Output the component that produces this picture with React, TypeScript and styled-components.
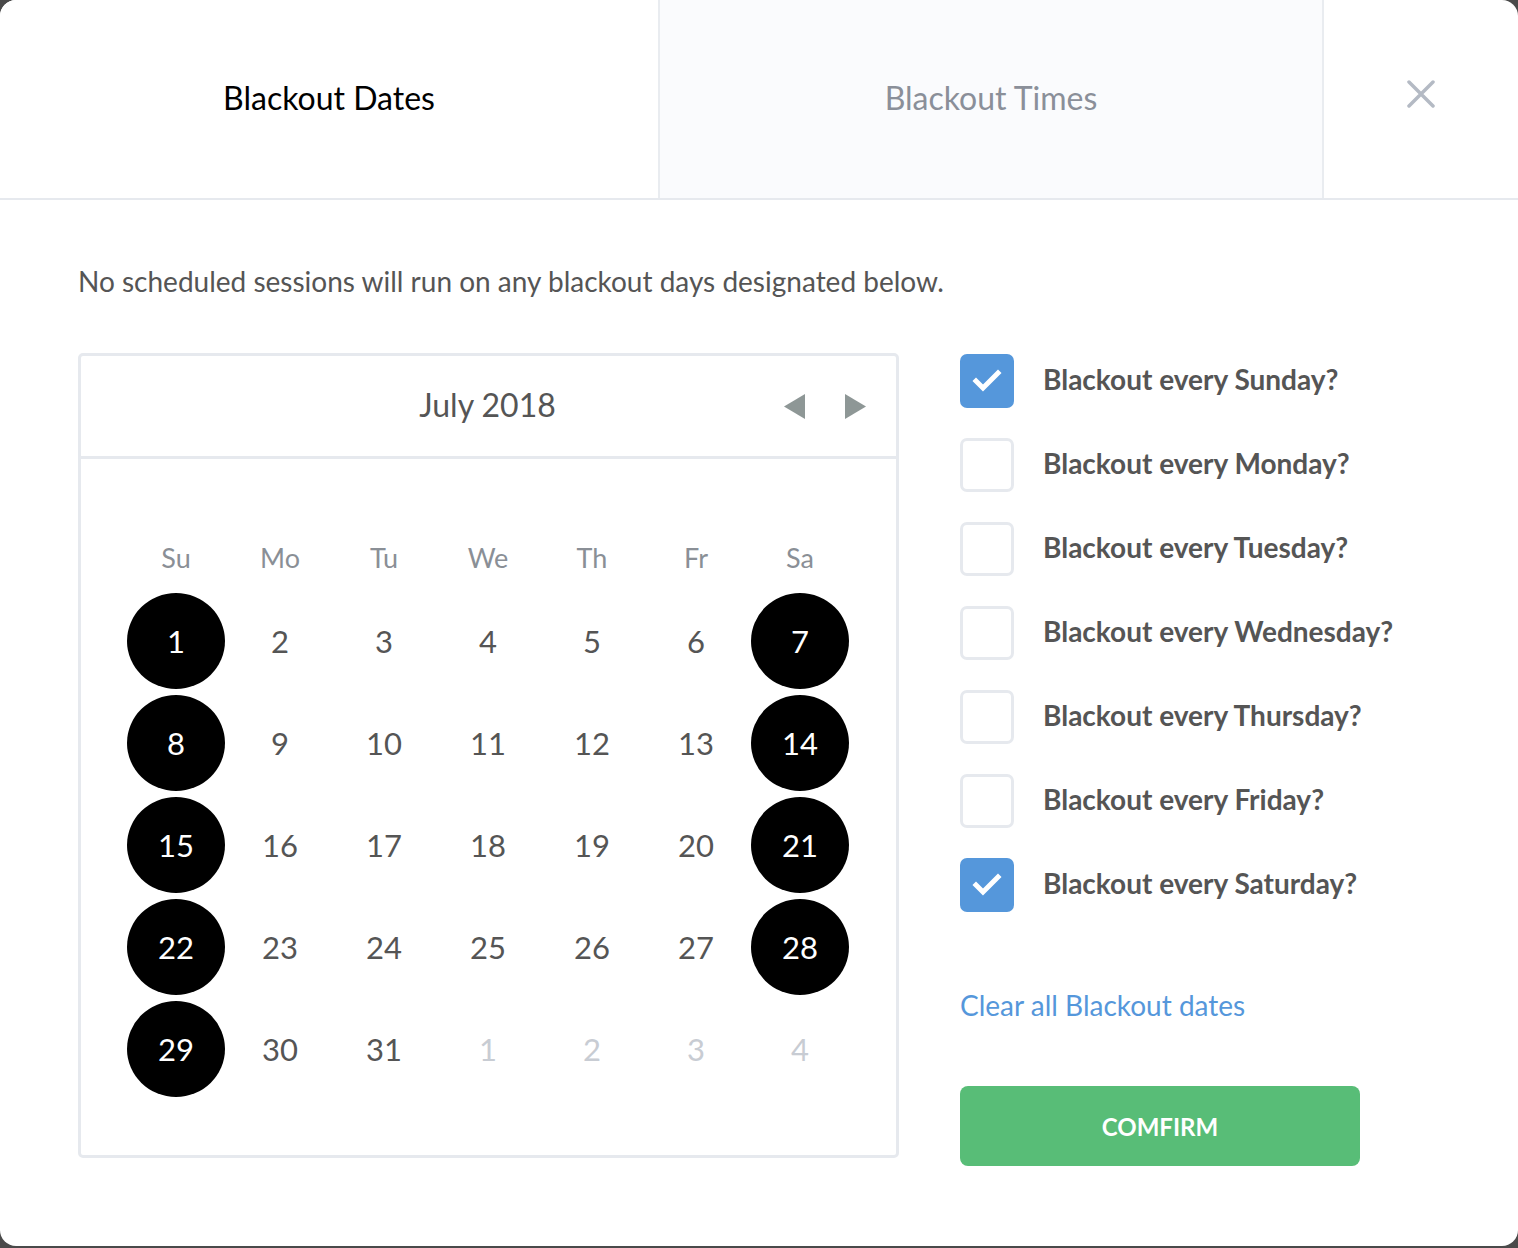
import React, { useState } from 'react'
import styled, { createGlobalStyle } from 'styled-components'

const GlobalStyle = createGlobalStyle`
  html, body {
    margin: 0;
    padding: 0;
    background: #4a4a4a;
  }
  * { box-sizing: border-box; }
  body {
    font-family: Lato, "Open Sans", sans-serif;
  }
`

const Modal = styled.div`
  width: 1518px;
  height: 1246px;
  background: #ffffff;
  border-radius: 16px;
  overflow: hidden;
  display: flex;
  flex-direction: column;
`

const Header = styled.div`
  display: flex;
  height: 200px;
  border-bottom: 2px solid #e6e9ee;
`

interface TabProps {
  active?: boolean
}
const Tab = styled.div<TabProps>`
  display: flex;
  align-items: center;
  justify-content: center;
  width: ${p => p.active ? '660px' : '664px'};
  background: ${p => p.active ? '#ffffff' : '#fafbfd'};
  border-right: 2px solid #e9ecf0;
  font-size: 32px;
  color: ${p => p.active ? '#000000' : '#8a8f99'};
  padding-bottom: 4px;
`

const Close = styled.div`
  flex: 1;
  display: flex;
  align-items: center;
  justify-content: center;
  padding-bottom: 10px;
`

const Body = styled.div`
  padding: 64px 0 0 78px;
`

const Intro = styled.p`
  margin: 0;
  font-size: 28px;
  line-height: 34px;
  color: #555555;
`

const Main = styled.div`
  display: flex;
  align-items: flex-start;
  margin-top: 55px;
`

const Calendar = styled.div`
  width: 821px;
  height: 805px;
  border: 3px solid #e6e9ee;
  border-radius: 5px;
`

const CalHeader = styled.div`
  position: relative;
  height: 103px;
  border-bottom: 3px solid #e6e9ee;
  display: flex;
  align-items: center;
  justify-content: center;
  font-size: 32px;
  color: #555555;
`

const Month = styled.span`
  margin-left: -2px;
  margin-top: -4px;
`

const Arrows = styled.div`
  position: absolute;
  right: 30px;
  top: 38px;
  display: flex;
  gap: 40px;
`

const Grid = styled.div`
  padding: 75px 0 0 43px;
`

const WeekRow = styled.div`
  display: grid;
  grid-template-columns: repeat(7, 104px);
  height: 46px;
  align-items: center;
  margin-bottom: 10px;
`

const WeekDay = styled.div`
  text-align: center;
  font-size: 27px;
  color: #8a8f96;
`

const DayRow = styled.div`
  display: grid;
  grid-template-columns: repeat(7, 104px);
  height: 102px;
  align-items: center;
  justify-items: center;
`

interface DayProps {
  selected?: boolean
  muted?: boolean
}
const Day = styled.div<DayProps>`
  width: 98px;
  height: 96px;
  border-radius: 50%;
  display: flex;
  align-items: center;
  justify-content: center;
  font-size: 31px;
  background: ${p => p.selected ? '#000000' : 'transparent'};
  color: ${p => p.selected ? '#ffffff' : p.muted ? '#c8ccd3' : '#555555'};
`

const Side = styled.div`
  margin-left: 61px;
  padding-top: 1px;
  display: flex;
  flex-direction: column;
`

const Option = styled.label`
  display: flex;
  align-items: center;
  height: 54px;
  margin-bottom: 30px;
  font-weight: 700;
  font-size: 28px;
  color: #555555;
  cursor: pointer;
`

const OptionText = styled.span`
  margin-top: -4px;
`

const Box = styled.span<{ checked: boolean }>`
  width: 54px;
  height: 54px;
  border-radius: 7px;
  margin-right: 29px;
  display: flex;
  align-items: center;
  justify-content: center;
  background: ${p => p.checked ? '#5597db' : '#ffffff'};
  border: ${p => p.checked ? 'none' : '3px solid #e6e9ee'};
`

const ClearLink = styled.a`
  margin-top: 46px;
  font-size: 28px;
  line-height: 34px;
  color: #5597db;
  text-decoration: none;
  cursor: pointer;
`

const ConfirmButton = styled.button`
  margin-top: 64px;
  width: 400px;
  height: 80px;
  border: none;
  border-radius: 8px;
  background: #58bd77;
  color: #ffffff;
  font-family: Lato, "Open Sans", sans-serif;
  font-weight: 700;
  font-size: 24px;
  cursor: pointer;
`

const weekDays = ['Su', 'Mo', 'Tu', 'We', 'Th', 'Fr', 'Sa']
const dayNames = ['Sunday', 'Monday', 'Tuesday', 'Wednesday', 'Thursday', 'Friday', 'Saturday']

const Check = () => (
  <svg width="30" height="24" viewBox="0 0 30 24">
    <polyline points="4,12 11,19 26,4" fill="none" stroke="#fff" strokeWidth="5" strokeLinecap="square" />
  </svg>
)

const App = () => {
  const [checked, setChecked] = useState<boolean[]>([true, false, false, false, false, false, true])

  const rows: { n: number, muted: boolean }[][] = []
  for (let r = 0; r < 5; r++) {
    const row = []
    for (let c = 0; c < 7; c++) {
      const n = r * 7 + c + 1
      row.push(n > 31 ? { n: n - 31, muted: true } : { n, muted: false })
    }
    rows.push(row)
  }

  return (
    <>
      <GlobalStyle />
      <Modal>
        <Header>
          <Tab active>Blackout Dates</Tab>
          <Tab>Blackout Times</Tab>
          <Close>
            <svg width="28" height="28" viewBox="0 0 28 28">
              <path d="M2 2 L26 26 M26 2 L2 26" stroke="#b4bac4" strokeWidth="3.5" strokeLinecap="round" />
            </svg>
          </Close>
        </Header>
        <Body>
          <Intro>No scheduled sessions will run on any blackout days designated below.</Intro>
          <Main>
            <Calendar>
              <CalHeader>
                <Month>July 2018</Month>
                <Arrows>
                  <svg width="21" height="25" viewBox="0 0 21 25"><polygon points="21,0 21,25 0,12.5" fill="#8e9796" /></svg>
                  <svg width="21" height="25" viewBox="0 0 21 25"><polygon points="0,0 0,25 21,12.5" fill="#8e9796" /></svg>
                </Arrows>
              </CalHeader>
              <Grid>
                <WeekRow>
                  {weekDays.map(d => <WeekDay key={d}>{d}</WeekDay>)}
                </WeekRow>
                {rows.map((row, ri) => (
                  <DayRow key={ri}>
                    {row.map((d, ci) => (
                      <Day key={ci} muted={d.muted} selected={!d.muted && checked[ci]}>{d.n}</Day>
                    ))}
                  </DayRow>
                ))}
              </Grid>
            </Calendar>
            <Side>
              {dayNames.map((name, i) => (
                <Option key={name} onClick={() => setChecked(checked.map((v, j) => j === i ? !v : v))}>
                  <Box checked={checked[i]}>{checked[i] && <Check />}</Box>
                  <OptionText>Blackout every {name}?</OptionText>
                </Option>
              ))}
              <ClearLink onClick={() => setChecked(checked.map(() => false))}>Clear all Blackout dates</ClearLink>
              <ConfirmButton>COMFIRM</ConfirmButton>
            </Side>
          </Main>
        </Body>
      </Modal>
    </>
  )
}

export default App
